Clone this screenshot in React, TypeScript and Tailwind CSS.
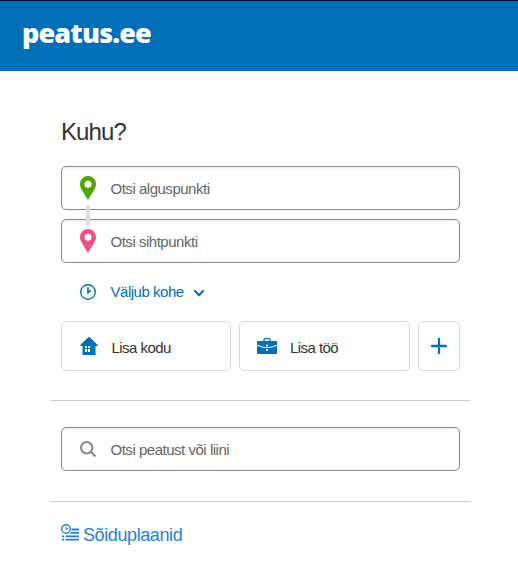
import type { ReactNode } from 'react';

function PinIcon({ className }: { className: string }) {
  return (
    <svg viewBox="0 0 16 24" className={`h-6 w-4 shrink-0 ${className}`} fill="currentColor">
      <path fillRule="evenodd" d="M8 0a8 8 0 0 1 8 8c0 2-.7 3.700-1.600 5.400L8 24 1.600 13.400C.7 11.700 0 10 0 8a8 8 0 0 1 8-8Zm0 4.700a3.500 3.500 0 1 0 0 7 3.500 3.500 0 0 0 0-7Z" />
    </svg>
  );
}

function ClockIcon() {
  return (
    <svg viewBox="0 0 16 16" className="size-4 shrink-0" fill="none" stroke="currentColor">
      <circle cx="8" cy="8" r="7.250" strokeWidth="1.400" />
      <path d="M8 3.300v5.500l3-2.400" strokeWidth="1.700" />
    </svg>
  );
}

function HouseIcon() {
  return (
    <svg viewBox="0 0 18 18" className="size-[18px] shrink-0" fill="currentColor">
      <path fillRule="evenodd" d="M8 .4Q9 -.3 10 .4L17.700 8q.6.9-.4 1H15.500v9h-13V9H.7q-1-.1-.4-1ZM5 9v2h2V9Zm3 0v2h2V9Zm-3 3v3h2v-3Zm3 0v3h2v-3Z" />
    </svg>
  );
}

function BriefcaseIcon() {
  return (
    <svg viewBox="0 0 20 16" className="h-4 w-5 shrink-0">
      <path d="M7 3V1.700Q7 .7 8 .7h4q1 0 1 1V3" fill="none" stroke="currentColor" strokeWidth="1.300" />
      <rect y="3" width="20" height="13" rx="1" fill="currentColor" />
      <path d="M0 7.200Q10 12 20 7.200" fill="none" stroke="#fff" strokeWidth="1" />
      <path d="M9.200 6.500h1.600v2H9.200ZM9.200 11h1.600v2H9.200Z" fill="#fff" />
    </svg>
  );
}

function TimetableIcon() {
  return (
    <svg viewBox="0 0 18 17" className="-mt-1.5 h-[17px] w-[18px] shrink-0" fill="none" stroke="currentColor">
      <circle cx="5" cy="5" r="4.300" strokeWidth="1.400" />
      <path d="M5 2.500V5.500L7 4.200" strokeWidth="1" />
      <path d="M10.500 5.500H18M9.500 8.900H18M4.500 12.300H18M4.500 15.700H18M1 12.300h2M1 15.700h2" strokeWidth="1.800" />
    </svg>
  );
}

function SearchField({ icon, label }: { icon: ReactNode; label: string }) {
  return (
    <div className="flex h-11 items-center rounded-[5px] border border-[#888] bg-white pl-[18px] shadow-[inset_0_2px_3px_rgba(0,0,0,0.06)]">
      {icon}
      <span className="ml-[14.5px] mt-0.5 text-[15px] tracking-[-0.48px] text-[#666]">{label}</span>
    </div>
  );
}

export default function App() {
  return (
    <div className="h-[588px] w-[518px] overflow-hidden bg-white font-['Liberation_Sans',Arial,sans-serif] text-[#333]">
      <header className="h-[71px] border-t border-[#07182d] bg-[#006fb7] pl-[22px] pt-[13px]">
        <h1 className="font-['Open_Sans',sans-serif] text-[27px] font-extrabold leading-[38px] tracking-[-0.85px] text-white">peatus.ee</h1>
      </header>

      <main className="px-[51px]">
        <section className="pl-[10px] pr-[7px]">
          <h2 className="pt-[46px] text-[24px] leading-[30px] tracking-[-0.9px]">Kuhu?</h2>

          {/* Origin and destination */}
          <div className="relative mt-[19px] flex flex-col gap-[9px]">
            <SearchField icon={<PinIcon className="text-[#4fa600]" />} label="Otsi alguspunkti" />
            <SearchField icon={<PinIcon className="text-[#ec5188]" />} label="Otsi sihtpunkti" />
            <div className="absolute left-[25px] top-[39px] h-[21px] w-1 rounded-sm bg-[#ddd]" />
          </div>

          <button className="mt-[19px] flex h-5 items-center pl-[19px] text-[#0070b8]">
            <ClockIcon />
            <span className="ml-[14.5px] text-[15px] tracking-[-0.48px]">Väljub kohe</span>
            <svg viewBox="0 0 10 7" className="ml-[10px] mt-0.5 h-[7px] w-[10px]" fill="none" stroke="currentColor" strokeWidth="2" strokeLinecap="round" strokeLinejoin="round">
              <path d="m1 1 4 4.300L9 1" />
            </svg>
          </button>

          {/* Saved places */}
          <div className="mt-[19px] flex h-[50px] gap-2">
            <button className="flex w-[170px] items-center rounded-[5px] border border-[#d8d8d8] pl-[18px]">
              <span className="text-[#0070b8]"><HouseIcon /></span>
              <span className="ml-[13.5px] mt-1 text-[15px] tracking-[-0.55px]">Lisa kodu</span>
            </button>
            <button className="flex w-[171px] items-center rounded-[5px] border border-[#d8d8d8] pl-[17px]">
              <span className="text-[#0070b8]"><BriefcaseIcon /></span>
              <span className="ml-[13px] mt-1 text-[15px] tracking-[-0.55px]">Lisa töö</span>
            </button>
            <button className="flex w-[42px] items-center justify-center rounded-[5px] border border-[#d8d8d8] text-[#0070b8]">
              <svg viewBox="0 0 16 16" className="size-4" fill="none" stroke="currentColor" strokeWidth="2.300" strokeLinecap="round">
                <path d="M8 1v14M1 8h14" />
              </svg>
            </button>
          </div>
        </section>

        <hr className="-mr-[3px] mt-[29px] border-[#ccc]" />

        <section className="mt-[26px] pl-[10px] pr-[7px]">
          <SearchField
            icon={
              <svg viewBox="0 0 16 16" className="size-4 shrink-0 text-[#888]" fill="none" stroke="currentColor" strokeWidth="2">
                <circle cx="6.700" cy="6.700" r="5.700" />
                <path d="m11 11 4.500 4.500" />
              </svg>
            }
            label="Otsi peatust või liini"
          />
        </section>

        <hr className="-mr-[3px] mt-[30px] border-[#ccc]" />

        <a className="mt-[20px] flex items-center pl-[10px] text-[#1f83d6]">
          <TimetableIcon />
          <span className="ml-1 text-[18px] leading-[26px] tracking-[-0.4px]">Sõiduplaanid</span>
        </a>
      </main>
    </div>
  );
}
